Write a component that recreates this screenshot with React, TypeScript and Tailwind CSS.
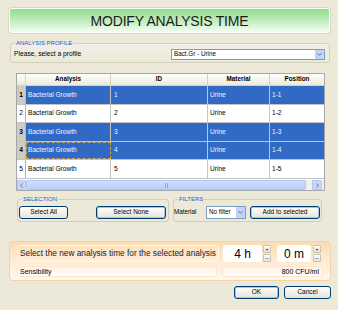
import { ChevronDown, ChevronLeft, ChevronRight } from 'lucide-react'

type Row = { n: number; id: string; pos: string; sel: boolean; focus?: boolean; h: string }

const rows: Row[] = [
  { n: 1, id: '1', pos: '1-1', sel: true, h: 'h-[19px]' },
  { n: 2, id: '2', pos: '1-2', sel: false, h: 'h-[18px]' },
  { n: 3, id: '3', pos: '1-3', sel: true, h: 'h-[19px]' },
  { n: 4, id: '4', pos: '1-4', sel: true, focus: true, h: 'h-[18px]' },
  { n: 5, id: '5', pos: '1-5', sel: false, h: 'h-[19px]' },
]

const cols = 'grid grid-cols-[9px_85px_97px_62px_54px]'

function XpButton({ label, focus, className }: { label: string; focus?: boolean; className: string }) {
  return (
    <button
      className={`${className} h-[13px] rounded-[3px] border border-[#003c74] bg-gradient-to-b from-white to-[#e6e3d6] text-[6.5px] leading-none text-black ${focus ? 'shadow-[inset_0_0_0_1px_#a8c4f0]' : ''}`}
    >
      {label}
    </button>
  )
}

function Spinner() {
  return (
    <div className="flex w-[8px] flex-col gap-[1px]">
      <div className="flex h-[8px] items-center justify-center rounded-[1px] border border-[#c8c3b4] bg-gradient-to-b from-white to-[#e4e1d6] text-[6px] leading-none text-[#333]">+</div>
      <div className="flex h-[8px] items-center justify-center rounded-[1px] border border-[#c8c3b4] bg-gradient-to-b from-white to-[#e4e1d6] text-[6px] leading-none text-[#333]">−</div>
    </div>
  )
}

export default function App() {
  return (
    <div className="flex h-[310px] w-[338px] flex-col overflow-hidden bg-[#ece9d8] pl-[9px] pt-[8px] font-['Liberation_Sans',Arial,sans-serif] text-black">
      {/* title */}
      <div className="flex h-[25px] w-[321px] items-center justify-center rounded-[3px] border border-white bg-gradient-to-b from-[#8ddb88] to-[#f3fcf2] shadow-[0_0_0_1px_#d8d6c8]">
        <span className="text-[14px] leading-none tracking-[-0.2px] text-[#1b1b1b]">MODIFY ANALYSIS TIME</span>
      </div>

      {/* analysis profile */}
      <fieldset className="ml-[1px] mt-[7px] w-[320px] rounded-[3px] border border-[#d0d0bf] bg-gradient-to-b from-[#f1efe6] to-[#ece9d8]">
        <legend className="ml-[4px] px-[1px] text-[6px] leading-[7px] text-[#1f5ad8]">ANALYSIS PROFILE</legend>
        <div className="flex h-[15px] items-center justify-between pl-[3px] pr-[4px]">
          <span className="text-[6.7px] leading-none">Please, select a profile</span>
          <div className="flex h-[11px] w-[154px] items-center border border-[#7f9db9] bg-white">
            <span className="flex-1 pl-[2px] text-[6.3px] leading-none">Bact.Gr - Urine</span>
            <div className="flex h-[9px] w-[9px] items-center justify-center rounded-[1px] bg-[#c1d3fb]">
              <ChevronDown size={7} strokeWidth={3} color="#4d6185" />
            </div>
          </div>
        </div>
      </fieldset>

      {/* table */}
      <div className="ml-[7px] mt-[10px] w-[309px] border border-[#a7a6aa] bg-white">
        <div className={`${cols} h-[12px] border-b border-[#d6d2c2] bg-gradient-to-b from-white to-[#ebeadb]`}>
          <div className="border-r border-[#d6d2c2]" />
          {['Analysis', 'ID', 'Material', 'Position'].map((h) => (
            <div key={h} className="flex items-center justify-center border-r border-[#d6d2c2] text-[6.3px] font-bold leading-none last:border-r-0">
              {h}
            </div>
          ))}
        </div>
        {rows.map((r) => (
          <div key={r.n} className={`${cols} ${r.h} border-b border-[#c4c4c4] text-[6.6px] leading-none`}>
            <div className={`flex items-center justify-center border-r border-[#b8b6ab] ${r.sel ? 'bg-[#cfccc1] font-bold' : 'bg-white'}`}>{r.n}</div>
            <div className={`flex items-center pl-[2px] ${r.sel ? 'bg-[#316ac5] text-[#eef3fc]' : ''} ${r.focus ? 'outline-1 -outline-offset-1 outline-dashed outline-[#d9a04a]' : 'border-r border-[#c4c4c4]'}`}>
              Bacterial Growth
            </div>
            <div className={`flex items-center border-r border-[#c4c4c4] pl-[3px] ${r.sel ? 'bg-[#316ac5] text-[#eef3fc]' : ''}`}>{r.id}</div>
            <div className={`flex items-center border-r border-[#c4c4c4] pl-[2px] ${r.sel ? 'bg-[#316ac5] text-[#eef3fc]' : ''}`}>Urine</div>
            <div className={`flex items-center pl-[2px] ${r.sel ? 'bg-[#316ac5] text-[#eef3fc]' : ''}`}>{r.pos}</div>
          </div>
        ))}
        <div className="h-[1px]" />
        {/* horizontal scrollbar */}
        <div className="flex h-[10px] bg-[#f3f1ea]">
          <div className="flex w-[9px] items-center justify-center rounded-[1px] border border-[#b6c8f0] bg-[#c8d8fb]">
            <ChevronLeft size={7} strokeWidth={3} color="#4d6185" />
          </div>
          <div className="flex w-[280px] items-center justify-center rounded-[2px] border border-[#b1c6f2] bg-gradient-to-b from-[#d1defc] to-[#b9cefa]">
            <div className="h-[5px] w-[3px] border-x border-[#8fa8dd]" />
          </div>
          <div className="flex-1" />
          <div className="flex w-[10px] items-center justify-center rounded-[1px] border border-[#b6c8f0] bg-[#c8d8fb]">
            <ChevronRight size={7} strokeWidth={3} color="#4d6185" />
          </div>
          <div className="w-[2px]" />
        </div>
      </div>

      {/* selection + filters */}
      <div className="ml-[8px] mt-[5px] flex gap-[4px]">
        <fieldset className="w-[152px] rounded-[3px] border border-[#d0d0bf]">
          <legend className="ml-[4px] px-[1px] text-[6px] leading-[7px] text-[#1f5ad8]">SELECTION</legend>
          <div className="flex h-[18px] items-center justify-between pl-[1px] pr-[2px]">
            <XpButton label="Select All" className="w-[49px]" />
            <XpButton label="Select None" focus className="w-[70px]" />
          </div>
        </fieldset>
        <fieldset className="w-[149px] rounded-[3px] border border-[#d0d0bf]">
          <legend className="ml-[4px] px-[1px] text-[6px] leading-[7px] text-[#1f5ad8]">FILTERS</legend>
          <div className="flex h-[18px] items-center pr-[1px]">
            <span className="w-[32px] text-[6.3px] leading-none">Material</span>
            <div className="flex h-[13px] w-[40px] items-center border border-[#7f9db9] bg-white">
              <span className="flex-1 pl-[2px] text-[6.3px] leading-none">No filter</span>
              <div className="flex h-[11px] w-[9px] items-center justify-center rounded-[1px] bg-[#c1d3fb]">
                <ChevronDown size={7} strokeWidth={3} color="#4d6185" />
              </div>
            </div>
            <div className="flex-1" />
            <XpButton label="Add to selected" focus className="w-[70px]" />
          </div>
        </fieldset>
      </div>

      {/* analysis time panel */}
      <div className="mt-[19px] flex h-[40px] w-[322px] flex-col gap-[4px] rounded-[4px] border border-[#f6d3a4] bg-gradient-to-b from-[#fcdcb2] to-[#fff9f2] px-[7px] pt-[3px]">
        <div className="flex h-[17px] items-stretch">
          <div className="flex w-[202px] items-center rounded-[3px] border border-[#fff6ea] bg-gradient-to-b from-[#fde2bf] to-[#fdeedb] pl-[2px] text-[8.3px] leading-none text-[#222]">
            Select the new analysis time for the selected analysis
          </div>
          <div className="ml-[4px] flex w-[39px] items-center justify-center rounded-[3px] bg-white text-[12px] leading-none">4 h</div>
          <div className="ml-[1px] flex items-center">
            <Spinner />
          </div>
          <div className="ml-[6px] flex w-[34px] items-center justify-center rounded-[3px] bg-white text-[12px] leading-none">0 m</div>
          <div className="ml-[2px] flex items-center">
            <Spinner />
          </div>
        </div>
        <div className="flex h-[11px] gap-[5px]">
          <div className="flex w-[201px] items-center rounded-[3px] border border-[#fde6cc] bg-gradient-to-b from-[#fff1e2] to-white pl-[2px] text-[7px] leading-none">
            Sensibility
          </div>
          <div className="flex w-[101px] items-center justify-end rounded-[3px] border border-[#fde6cc] bg-gradient-to-b from-[#fff1e2] to-white pr-[3px] text-[7px] leading-none">
            800 CFU/ml
          </div>
        </div>
      </div>

      {/* dialog buttons */}
      <div className="mt-[5px] flex w-[322px] justify-end gap-[5px]">
        <XpButton label="OK" focus className="w-[45px]" />
        <XpButton label="Cancel" className="w-[47px]" />
      </div>
    </div>
  )
}
